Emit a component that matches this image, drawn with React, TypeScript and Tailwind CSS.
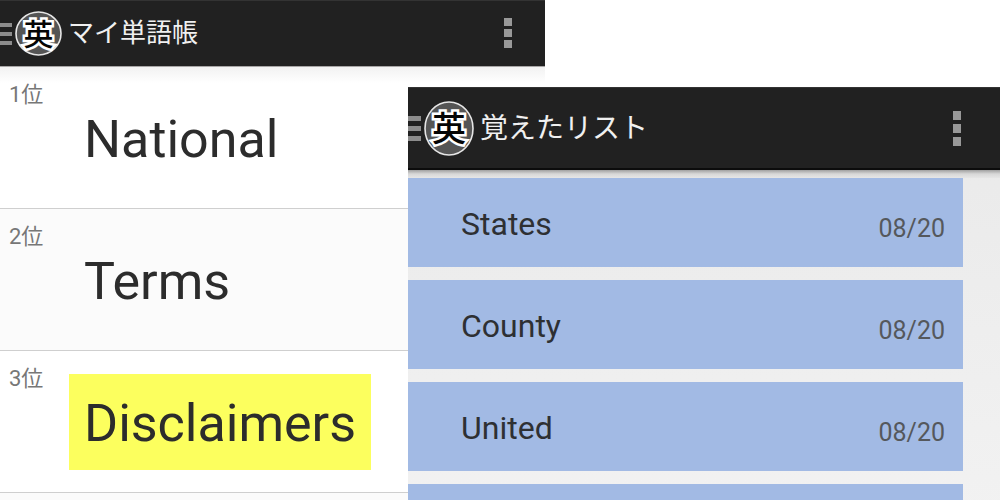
type LogoProps = { width: number; height: number; glyph: number };

function Logo({ width, height, glyph }: LogoProps) {
  return (
    <svg
      width={width}
      height={height}
      viewBox={`0 0 ${width} ${height}`}
      role="img"
      aria-label="英"
      className="shrink-0 overflow-visible"
    >
      <ellipse
        cx={width / 2}
        cy={height / 2}
        rx={width / 2 - 1}
        ry={height / 2 - 1}
        fill="#555555"
        stroke="#e6e6e6"
        strokeWidth="1.6"
      />
      <text
        x={width / 2}
        y={height / 2 + glyph * 0.37}
        textAnchor="middle"
        fontSize={glyph}
        fontWeight="500"
        fill="#050505"
        stroke="#ffffff"
        strokeWidth="5"
        paintOrder="stroke"
        className="font-['Noto_Sans_CJK_JP',sans-serif]"
      >
        英
      </text>
    </svg>
  );
}

function DrawerLines() {
  return (
    <span className="flex flex-col gap-[5px]">
      <span className="h-1 w-3 bg-[#8c8c8c]" />
      <span className="h-1 w-3 bg-[#8c8c8c]" />
      <span className="h-1 w-3 bg-[#8c8c8c]" />
    </span>
  );
}

function DrawerLinesLarge() {
  return (
    <span className="flex flex-col gap-[5px]">
      <span className="h-[5px] w-[13px] bg-[#8c8c8c]" />
      <span className="h-[5px] w-[13px] bg-[#8c8c8c]" />
      <span className="h-[5px] w-[13px] bg-[#8c8c8c]" />
    </span>
  );
}

const ranking = [
  { rank: "1位", word: "National", marked: false },
  { rank: "2位", word: "Terms", marked: false },
  { rank: "3位", word: "Disclaimers", marked: true },
  { rank: "", word: "", marked: false },
];

const learned = [
  { word: "States", date: "08/20" },
  { word: "County", date: "08/20" },
  { word: "United", date: "08/20" },
  { word: "", date: "" },
];

function WordBook() {
  return (
    <section className="w-[54.5%]">
      <header className="flex h-[67px] items-center justify-between border-t border-b border-t-[#333333] border-b-[#a8a6a6] bg-[#212121]">
        <div className="flex items-center gap-[6px]">
          <button type="button" aria-label="メニュー" className="flex items-center gap-[3px]">
            <DrawerLines />
            <Logo width={47} height={45} glyph={30} />
          </button>
          <h1 className="pb-[2px] text-[26px] leading-8 text-[#f0f0f0]">マイ単語帳</h1>
        </div>
        <button type="button" aria-label="その他" className="mr-[33px] flex flex-col gap-[3px] pb-[2px]">
          <span className="size-2 bg-[#999999]" />
          <span className="size-2 bg-[#999999]" />
          <span className="size-2 bg-[#999999]" />
        </button>
      </header>
      <ol className="bg-linear-to-b from-[#f2f2f2] to-white to-[16px]">
        {ranking.map((item, i) => (
          <li
            key={i}
            className={
              i % 2 === 1
                ? "flex h-[142px] items-start border-b border-[#cfcfcf] bg-[#fbfbfb]"
                : "flex h-[142px] items-start border-b border-[#cfcfcf]"
            }
          >
            <span className="w-[69px] pt-3 pl-[9px] text-[22px] leading-8 text-[#777777]">
              {item.rank}
            </span>
            <span
              className={
                item.marked
                  ? "mt-[23px] bg-[#fcff5e] px-[15px] pt-5 pb-4 text-[52px] leading-[60px] text-[#2c2c2c]"
                  : "mt-[23px] px-[15px] pt-5 pb-4 text-[52px] leading-[60px] text-[#2c2c2c]"
              }
            >
              {item.word}
            </span>
          </li>
        ))}
      </ol>
    </section>
  );
}

function LearnedList() {
  return (
    <section className="absolute top-[87px] right-0 w-[59.2%] bg-linear-to-b from-[#e9e9e9] to-[#f3f3f3]">
      <header className="flex h-[83px] items-center justify-between border-t border-b-2 border-t-[#333333] border-b-[#0c0c0c] bg-[#212121]">
        <div className="flex items-center gap-[6px]">
          <button type="button" aria-label="メニュー" className="flex items-center gap-[3px]">
            <DrawerLinesLarge />
            <Logo width={50} height={55} glyph={34} />
          </button>
          <h1 className="pt-[2px] text-[28px] leading-9 text-[#f0f0f0]">覚えたリスト</h1>
        </div>
        <button type="button" aria-label="その他" className="mr-[39px] flex flex-col gap-[4px]">
          <span className="h-[9px] w-2 bg-[#999999]" />
          <span className="h-[9px] w-2 bg-[#999999]" />
          <span className="h-[9px] w-2 bg-[#999999]" />
        </button>
      </header>
      <div className="h-2 bg-linear-to-b from-[#a0a0a0] via-[#d8d8d8] to-[#e6e6e6]" />
      <ul className="mr-[37px] flex flex-col gap-[13px]">
        {learned.map((item, i) => (
          <li
            key={i}
            className="flex h-[89px] items-center justify-between bg-[#a2bae4] pr-[18px] pl-[53px]"
          >
            <span className="pt-[2px] text-[32px] leading-10 text-[#2e3033]">{item.word}</span>
            <span className="pt-3 text-[25px] leading-8 text-[#55585c]">{item.date}</span>
          </li>
        ))}
      </ul>
    </section>
  );
}

export default function App() {
  return (
    <main className="relative h-screen overflow-hidden bg-white font-[Roboto,'Noto_Sans_CJK_JP',sans-serif]">
      <WordBook />
      <LearnedList />
    </main>
  );
}
